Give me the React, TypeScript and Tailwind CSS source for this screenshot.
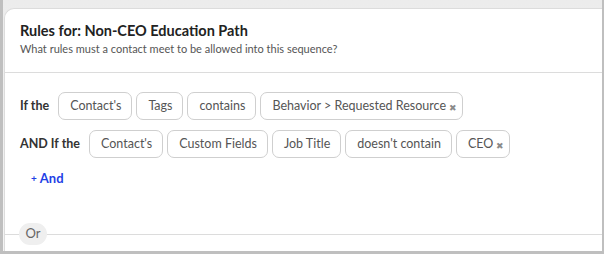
import { ReactNode } from 'react'

type ChipProps = { children: ReactNode; removable?: boolean }

function Chip({ children, removable }: ChipProps) {
  return (
    <span
      className={`flex h-[28px] items-center rounded-[7px] border border-[#cfcfcf] bg-white text-[12.5px] text-[#555] ${
        removable ? 'pl-[11px] pr-[5px]' : 'pl-[11px] pr-[10px]'
      }`}
    >
      {children}
      {removable && <span className="ml-[3px] mt-[2px] text-[9px] leading-none text-[#8a8a8a]">✖</span>}
    </span>
  )
}

function RuleRow({ label, chips }: { label: string; chips: { text: string; removable?: boolean }[] }) {
  return (
    <div className="flex items-center">
      <span className="mr-[9px] text-[12.5px] font-bold text-[#333]">{label}</span>
      <div className="flex gap-[4px]">
        {chips.map((c, i) => (
          <Chip key={i} removable={c.removable}>
            {c.text}
          </Chip>
        ))}
      </div>
    </div>
  )
}

export default function App() {
  return (
    <div
      className="h-[254px] w-[604px] bg-[#bfbfbf] pb-[3px] pl-[3px] pr-[2px]"
      style={{ fontFamily: 'Lato, "Liberation Sans", sans-serif' }}
    >
      <div className="flex h-full flex-col bg-gradient-to-b from-[#ececec] to-[#f4f4f4] pl-[1px] pt-[8px]">
        <div className="flex flex-1 flex-col rounded-tl-[10px] border-l border-t border-[#dcdcdc] bg-white">
          <div className="border-b border-[#dcdcdc] px-[15px] pb-[15px] pt-[12px]">
            <h1 className="text-[14.5px] font-bold leading-[20px] text-[#222]">Rules for: Non-CEO Education Path</h1>
            <p className="text-[11px] leading-[16px] text-[#555]">What rules must a contact meet to be allowed into this sequence?</p>
          </div>

          <div className="flex flex-col gap-[10px] px-[15px] pt-[19px]">
            <RuleRow
              label="If the"
              chips={[
                { text: "Contact's" },
                { text: 'Tags' },
                { text: 'contains' },
                { text: 'Behavior > Requested Resource', removable: true },
              ]}
            />
            <RuleRow
              label="AND If the"
              chips={[
                { text: "Contact's" },
                { text: 'Custom Fields' },
                { text: 'Job Title' },
                { text: "doesn't contain" },
                { text: 'CEO', removable: true },
              ]}
            />
          </div>

          <a className="ml-[26px] mt-[12px] flex items-center gap-[3px] text-[13px] font-bold leading-[16px] text-[#1f3fe6]">
            <span className="text-[10px]">+</span>
            And
          </a>

          <div className="relative mt-[37px] h-[22px]">
            <div className="absolute inset-x-0 top-[11px] border-t border-[#dcdcdc]" />
            <span className="relative ml-[14px] flex h-[22px] w-[28px] items-center justify-center rounded-full bg-[#efefef] text-[13px] text-[#666]">
              Or
            </span>
          </div>
        </div>
      </div>
    </div>
  )
}
